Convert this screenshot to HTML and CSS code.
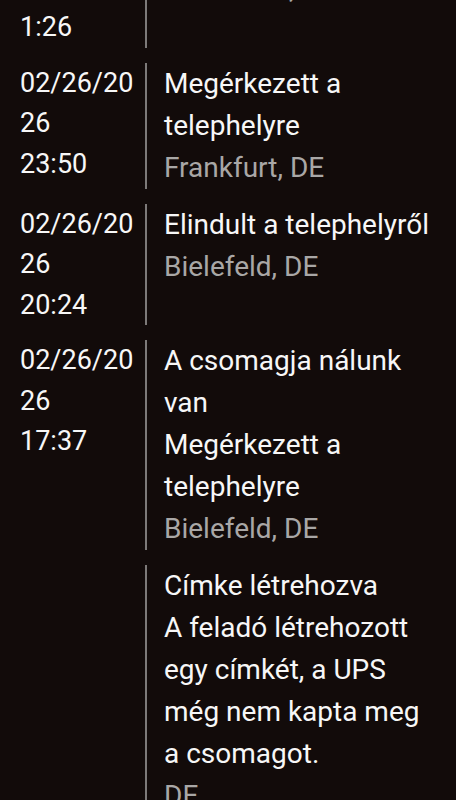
FILE: index.html
```html
<!DOCTYPE html>
<html lang="hu">
<head>
<meta charset="utf-8">
<title>Csomagkövetés</title>
<link rel="stylesheet" href="styles.css">
</head>
<body>
<ul class="timeline">
  <li class="event">
    <div class="when"><div class="date">02/27/2026</div><div class="time">1:26</div></div>
    <div class="what"><p class="status">Elindult a telephelyről</p><p class="loc">Dortmund, DE</p></div>
  </li>
  <li class="event">
    <div class="when"><div class="date">02/26/2026</div><div class="time">23:50</div></div>
    <div class="what"><p class="status">Megérkezett a telephelyre</p><p class="loc">Frankfurt, DE</p></div>
  </li>
  <li class="event">
    <div class="when"><div class="date">02/26/2026</div><div class="time">20:24</div></div>
    <div class="what"><p class="status">Elindult a telephelyről</p><p class="loc">Bielefeld, DE</p></div>
  </li>
  <li class="event">
    <div class="when"><div class="date">02/26/2026</div><div class="time">17:37</div></div>
    <div class="what"><p class="status">A csomagja nálunk van</p><p class="desc">Megérkezett a telephelyre</p><p class="loc">Bielefeld, DE</p></div>
  </li>
  <li class="event">
    <div class="when"></div>
    <div class="what"><p class="status">Címke létrehozva</p><p class="desc">A feladó létrehozott egy címkét, a UPS még nem kapta meg a csomagot.</p><p class="loc">DE</p></div>
  </li>
</ul>
</body>
</html>
```
FILE: styles.css
```css
html, body {
  margin: 0;
  padding: 0;
  background: #120b0a;
}
body {
  font-family: Roboto, "Noto Sans", "Liberation Sans", sans-serif;
  color: #f7f7f7;
  overflow: hidden;
}
.timeline {
  list-style: none;
  margin: -74px 0 0;
  padding: 0;
}
.event {
  display: flex;
  padding: 0 20px;
  margin-bottom: 15px;
}
.when {
  flex: 0 0 125px;
  box-sizing: border-box;
  padding-right: 6px;
  font-size: 27px;
  line-height: 40.5px;
  word-break: break-all;
}
.what {
  flex: 1;
  border-left: 2px solid #7d7a79;
  padding-left: 17px;
  font-size: 28px;
  line-height: 42px;
}
.what p {
  margin: 0;
}
.loc {
  color: #a9a7a6;
}
```
